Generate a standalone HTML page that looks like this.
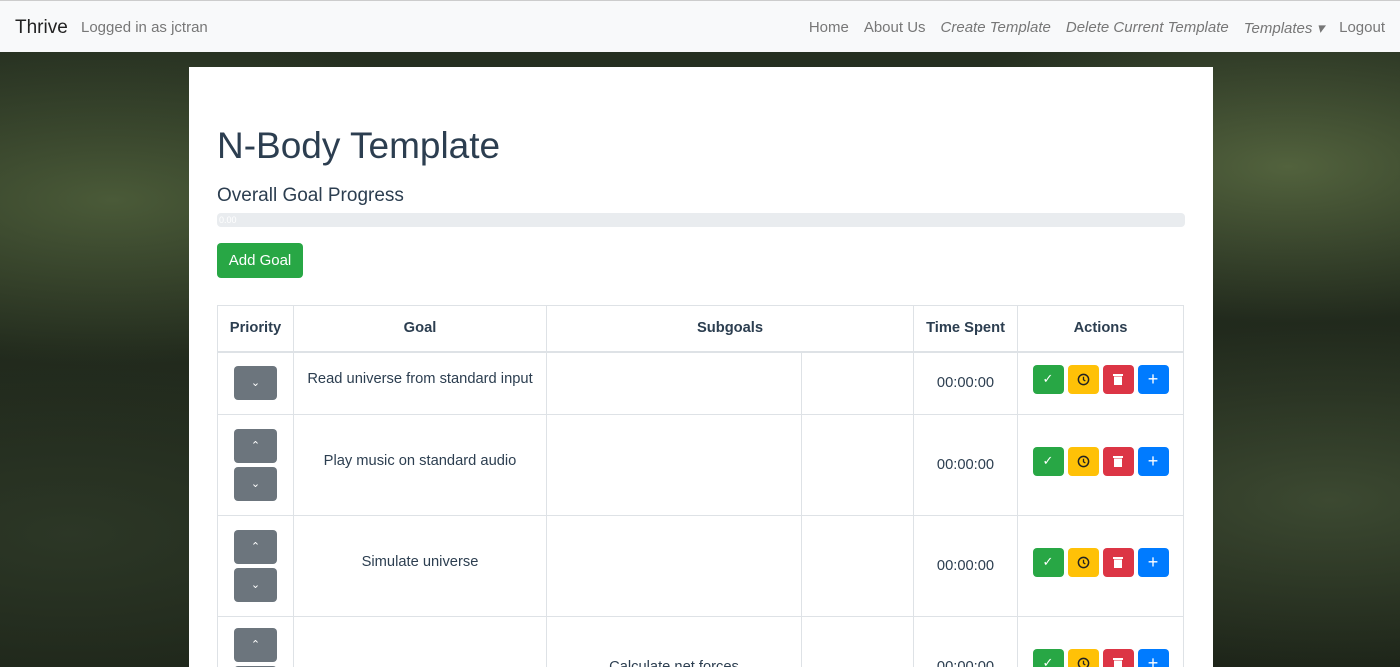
<!DOCTYPE html>
<html><head><style>
*{box-sizing:border-box;margin:0;padding:0}
html,body{width:1400px;height:667px;overflow:hidden}
body{font-family:"Liberation Sans",sans-serif;position:relative;
background:radial-gradient(ellipse at 8% 30%,#4a5a38 0,transparent 25%),radial-gradient(ellipse at 92% 25%,#52623d 0,transparent 22%),radial-gradient(ellipse at 95% 75%,#3c4931 0,transparent 25%),radial-gradient(ellipse at 5% 80%,#2c3726 0,transparent 25%),linear-gradient(#263021,#1c2318);}
.nav{position:absolute;left:0;top:0;width:1400px;height:52px;background:#f8f9fa;border-top:1px solid #ccc}
.nav .brand{position:absolute;left:15px;top:16px;font-size:19px;color:#222}
.nav .log{position:absolute;left:81px;top:18px;font-size:15px;color:#777}
.nav .links{position:absolute;right:15px;top:18px;font-size:15px;color:#777;display:flex;gap:15px}
.nav i{font-style:italic}
.card{position:absolute;left:189px;top:67px;width:1024px;height:600px;background:#fff;overflow:hidden}
h1{position:absolute;left:28px;top:58px;font-size:37px;font-weight:400;color:#2c3e50}
h2{position:absolute;left:28px;top:118px;font-size:19px;font-weight:400;color:#2c3e50}
.prog{position:absolute;left:28px;top:146px;width:968px;height:14px;background:#e9ecef;border-radius:4px;font-size:9px;color:#fff;padding-left:2px;line-height:14px}
.add{position:absolute;left:28px;top:176px;width:86px;height:35px;background:#28a745;border-radius:4px;color:#fff;font-size:15px;text-align:center;line-height:35px}
table{position:absolute;left:28px;top:238px;width:967px;border-collapse:collapse;color:#2c3e50;font-size:14.7px;table-layout:fixed}
td,th{border:1px solid #dee2e6;text-align:center;vertical-align:middle}
th{height:46px;font-weight:700;border-bottom:2px solid #dee2e6}
.pb{display:block;margin:0 auto;width:43px;height:34px;background:#6c757d;border-radius:4px;color:#fff;font-size:11px;line-height:34px}
.pb+.pb{margin-top:4px}
.acts{display:flex;gap:4px;justify-content:center}
.acts span{width:31px;height:29px;border-radius:4px;color:#fff;display:flex;align-items:center;justify-content:center;font-size:13px}
</style></head><body>
<div class="nav"><span class="brand">Thrive</span><span class="log">Logged in as jctran</span>
<div class="links"><span>Home</span><span>About Us</span><i>Create Template</i><i>Delete Current Template</i><i>Templates ▾</i><span>Logout</span></div></div>
<div class="card">
<h1>N-Body Template</h1>
<h2>Overall Goal Progress</h2>
<div class="prog">0.00</div>
<div class="add">Add Goal</div>
<table>
<colgroup><col style="width:76px"><col style="width:253px"><col style="width:255px"><col style="width:112px"><col style="width:104px"><col></colgroup>
<tr><th>Priority</th><th>Goal</th><th colspan="2">Subgoals</th><th>Time Spent</th><th>Actions</th></tr>
<tr style="height:63px"><td><span class="pb">⌄</span></td><td style="padding-bottom:8px">Read universe from standard input</td><td></td><td></td><td>00:00:00</td><td>ACT</td></tr>
<tr style="height:101px"><td><span class="pb">⌃</span><span class="pb">⌄</span></td><td style="padding-bottom:8px">Play music on standard audio</td><td></td><td></td><td>00:00:00</td><td>ACT</td></tr>
<tr style="height:101px"><td><span class="pb">⌃</span><span class="pb">⌄</span></td><td style="padding-bottom:8px">Simulate universe</td><td></td><td></td><td>00:00:00</td><td>ACT</td></tr>
<tr style="height:101px"><td style="vertical-align:top;padding-top:11px"><span class="pb">⌃</span><span class="pb">⌄</span></td><td></td><td>Calculate net forces</td><td></td><td>00:00:00</td><td>ACT</td></tr>
</table>
</div>
<script>
document.querySelectorAll('td').forEach(t=>{if(t.textContent==='ACT'){t.style.paddingBottom='8px';t.innerHTML='<div class="acts"><span style="background:#28a745">✓</span><span style="background:#ffc107;color:#222"><svg width="13" height="13" viewBox="0 0 14 14"><circle cx="7" cy="7" r="5.5" fill="none" stroke="#222" stroke-width="1.6"/><path d="M7 4v3.3l2 1.3" stroke="#222" stroke-width="1.4" fill="none"/></svg></span><span style="background:#dc3545"><svg width="10" height="12" viewBox="0 0 10 12"><rect x="0" y="1" width="10" height="2" fill="#fff"/><rect x="1" y="3.5" width="8" height="8.5" fill="#fff"/></svg></span><span style="background:#007bff;font-size:18px">+</span></div>'}});
</script>
</body></html>
